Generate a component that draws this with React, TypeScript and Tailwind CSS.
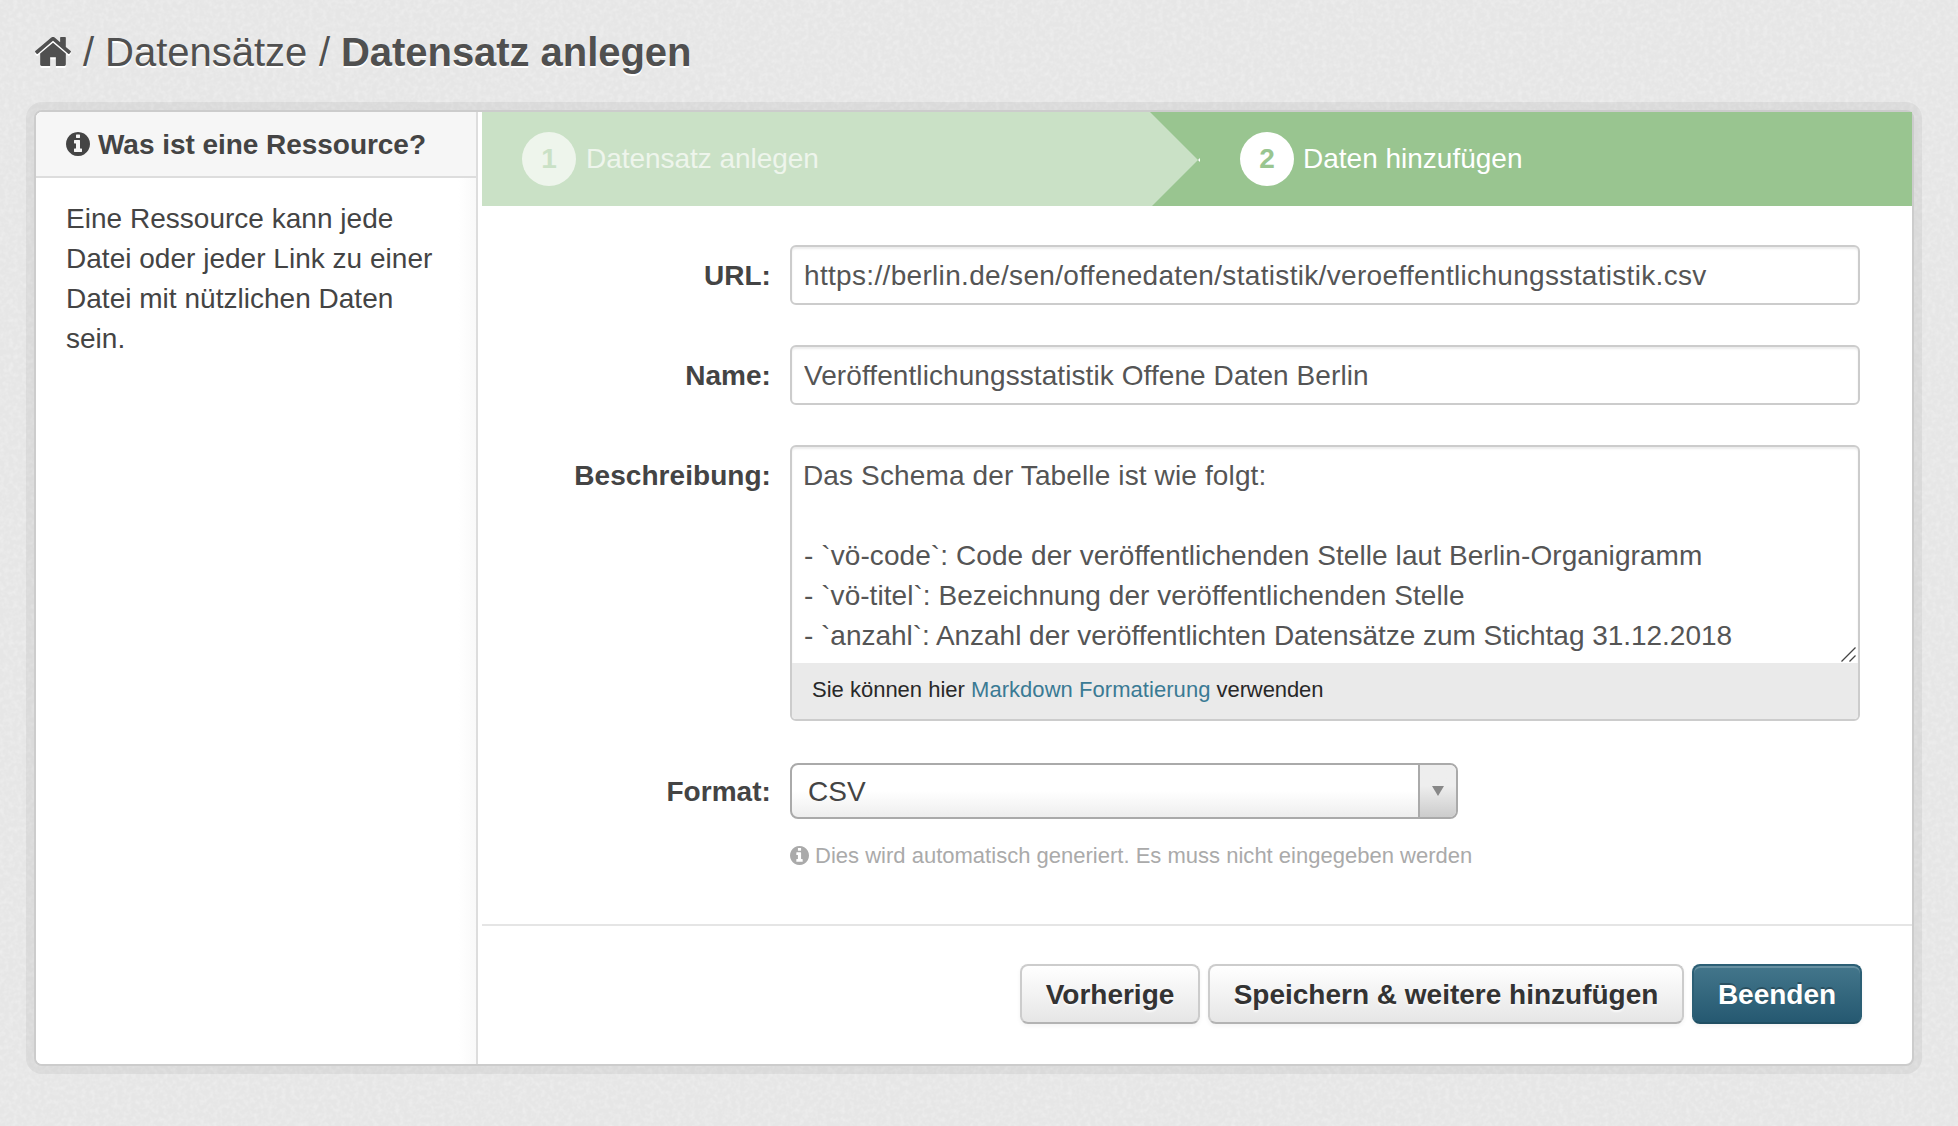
import React from 'react';

function HomeIcon() {
  return (
    <svg viewBox="24 256 1616 1280" preserveAspectRatio="none" className="h-[29px] w-[36px]" fill="currentColor">
      <path d="M1408 992v480q0 26-19 45t-45 19h-384v-384h-256v384h-384q-26 0-45-19t-19-45v-480q0-1 .5-3t.5-3l575-474 575 474q1 2 1 6zm223-69l-62 74q-8 9-21 11h-3q-13 0-21-7l-692-577-692 577q-12 8-24 7-13-2-21-11l-62-74q-8-10-7-23.5t11-21.5l719-599q32-26 76-26t76 26l244 204v-195q0-14 9-23t23-9h192q14 0 23 9t9 23v408l219 182q10 8 11 21.5t-7 23.5z" />
    </svg>
  );
}

function InfoIcon({ className }: { className: string }) {
  return (
    <svg viewBox="128 128 1536 1536" className={className} fill="currentColor">
      <path d="M1152 1376v-160q0-14-9-23t-23-9h-96v-512q0-14-9-23t-23-9h-320q-14 0-23 9t-9 23v160q0 14 9 23t23 9h96v320h-96q-14 0-23 9t-9 23v160q0 14 9 23t23 9h448q14 0 23-9t9-23zm-128-896v-160q0-14-9-23t-23-9h-192q-14 0-23 9t-9 23v160q0 14 9 23t23 9h192q14 0 23-9t9-23zm640 416q0 209-103 385.5t-279.5 279.5-385.5 103-385.5-103-279.5-279.5-103-385.5 103-385.5 279.5-279.5 385.5-103 385.5 103 279.5 279.5 103 385.5z" />
    </svg>
  );
}

function PaperTexture() {
  return (
    <svg className="absolute inset-0 h-full w-full" aria-hidden="true">
      <filter id="paper" x="0" y="0" width="100%" height="100%">
        <feTurbulence type="fractalNoise" baseFrequency="0.22" numOctaves={2} seed={4} />
        <feColorMatrix type="matrix" values="0 0 0 0 1  0 0 0 0 1  0 0 0 0 1  0.6 0 0 0 -0.24" />
      </filter>
      <rect width="100%" height="100%" filter="url(#paper)" />
    </svg>
  );
}

function Label({ children }: { children: React.ReactNode }) {
  return (
    <label className="mr-[19px] mt-[11px] w-[289px] shrink-0 text-right font-bold tracking-[0.05px] text-[#444]">
      {children}
    </label>
  );
}

const fieldBox =
  'h-[60px] w-[1070px] rounded-[6px] border-2 border-[#ccc] bg-white pl-[12px] pt-px leading-[40px] text-[#555] shadow-[inset_0_2px_2px_rgba(0,0,0,0.075)] outline-none';

const buttonBase = 'h-[60px] rounded-[8px] border-2 pt-[2px] text-center font-bold leading-[54px]';
const buttonPlain =
  'border-[#ccc] border-b-[#b3b3b3] bg-linear-to-b from-white to-[#e6e6e6] text-[#333] [text-shadow:0_2px_2px_rgba(255,255,255,0.75)] shadow-[inset_0_2px_0_rgba(255,255,255,0.2),0_2px_4px_rgba(0,0,0,0.05)]';

export default function App() {
  return (
    <div className="relative h-[1126px] w-[1958px] overflow-hidden bg-[#e6e6e6] font-['Liberation_Sans',Arial,sans-serif] text-[28px] leading-[40px] text-[#444]">
      <PaperTexture />
      <div className="relative pl-[34px] pt-[32px]">
        <nav className="flex h-[78px] items-start text-[40px] text-[#505050] [text-shadow:0_2px_0_#fff]">
          <a className="ml-px mt-[5px] [filter:drop-shadow(0_2px_0_#fff)]">
            <HomeIcon />
          </a>
          <span className="ml-[12px] w-[11px]">/</span>
          <a className="ml-[11px] w-[203px]">Datensätze</a>
          <span className="ml-[11px] w-[12px]">/</span>
          <a className="ml-[10px] font-bold tracking-[-0.05px]">Datensatz anlegen</a>
        </nav>

        <div className="flex h-[956px] w-[1880px] rounded-[8px] border-2 border-[#ccc] bg-white shadow-[0_0_0_8px_rgba(0,0,0,0.05)]">
          <aside className="w-[442px] shrink-0 rounded-l-[6px] border-r-2 border-[#ddd] bg-linear-to-r from-white from-[96%] to-[#f9f9f9]">
            <h2 className="flex h-[66px] items-start rounded-tl-[6px] border-b-2 border-[#ddd] bg-[#f6f6f6] pl-[30px] pt-[13px] font-bold tracking-[-0.04px]">
              <InfoIcon className="mr-[8px] mt-[7px] size-6" />
              Was ist eine Ressource?
            </h2>
            <p className="pl-[30px] pt-[21px] tracking-[0.02px]">
              Eine Ressource kann jede
              <br />
              Datei oder jeder Link zu einer
              <br />
              Datei mit nützlichen Daten
              <br />
              sein.
            </p>
          </aside>

          <main className="ml-[4px] w-[1430px]">
            <ol className="flex h-[94px]">
              <li className="flex w-[668px] items-start bg-[#cae1c6] pl-[40px] text-[#eef5ec]">
                <span className="mt-[20px] size-[54px] rounded-full bg-[#eef5ec] text-center font-bold leading-[53px] text-[#cae1c6]">
                  1
                </span>
                <span className="ml-[10px] mt-[27px] tracking-[-0.04px]">Datensatz anlegen</span>
              </li>
              <li className="flex w-[762px] items-start bg-[#99c590] text-white">
                <svg viewBox="0 0 50 94" className="h-[94px] w-[50px]">
                  <path d="M0 0L48 48L2 94H0Z" fill="#cae1c6" />
                  <path d="M50 46L48 48L50 50Z" fill="#fff" />
                </svg>
                <span className="ml-[40px] mt-[20px] size-[54px] rounded-full bg-white text-center font-bold leading-[53px] text-[#99c590]">
                  2
                </span>
                <span className="ml-[9px] mt-[27px]">Daten hinzufügen</span>
              </li>
            </ol>

            <form className="h-[718px] pt-[39px]">
              <div className="flex h-[100px] items-start">
                <Label>URL:</Label>
                <input
                  className={`${fieldBox} tracking-[0.324px]`}
                  defaultValue="https://berlin.de/sen/offenedaten/statistik/veroeffentlichungsstatistik.csv"
                />
              </div>
              <div className="flex h-[100px] items-start">
                <Label>Name:</Label>
                <input
                  className={`${fieldBox} tracking-[0.083px]`}
                  defaultValue="Veröffentlichungsstatistik Offene Daten Berlin"
                />
              </div>
              <div className="flex h-[318px] items-start">
                <Label>Beschreibung:</Label>
                <div className="h-[276px] w-[1070px] overflow-hidden rounded-[6px] border-2 border-[#ccc] shadow-[inset_0_2px_2px_rgba(0,0,0,0.075)]">
                  <div className="relative h-[216px] whitespace-pre pl-[12px] pt-[9px] text-[#555]">
                    <div className="-ml-px tracking-[0.13px]">Das Schema der Tabelle ist wie folgt:</div>
                    <div className="h-[40px]" />
                    <div className="tracking-[0.079px]">
                      - `vö-code`: Code der veröffentlichenden Stelle laut Berlin-Organigramm
                    </div>
                    <div className="tracking-[0.05px]">- `vö-titel`: Bezeichnung der veröffentlichenden Stelle</div>
                    <div className="tracking-[-0.03px]">
                      - `anzahl`: Anzahl der veröffentlichten Datensätze zum Stichtag 31.12.2018
                    </div>
                    <svg viewBox="0 0 15 15" className="absolute bottom-px right-[2px] size-[15px]" stroke="#444" strokeWidth="1.3">
                      <path d="M0.5 14.5L14.5 0.5M8.5 14.5L14.5 8.5" />
                    </svg>
                  </div>
                  <div className="h-[56px] bg-[#eaeaea] pl-[20px] pt-[7px] text-[22px] text-[#282828]">
                    Sie können hier <a className="tracking-[0.05px] text-[#3a7a94]">Markdown Formatierung</a>{' '}
                    <span className="tracking-[-0.1px]">verwenden</span>
                  </div>
                </div>
              </div>
              <div className="flex items-start">
                <Label>
                  <span className="-mt-[2px] block">Format:</span>
                </Label>
                <div>
                  <div className="flex h-[56px] w-[668px] overflow-hidden rounded-[8px] border-2 border-[#aaa] bg-linear-to-b from-white from-50% to-[#eee]">
                    <span className="w-[626px] pl-[16px] pt-[7px]">CSV</span>
                    <span className="flex w-[38px] justify-center border-l-2 border-[#aaa] bg-linear-to-b from-[#eee] from-40% to-[#ccc] pt-[21px]">
                      <svg viewBox="0 0 12 10" className="h-[10px] w-[12px]" fill="#888">
                        <path d="M0 0H12L6 10Z" />
                      </svg>
                    </span>
                  </div>
                  <p className="mt-[17px] flex items-start text-[22px] tracking-[0.01px] text-[#aaa]">
                    <InfoIcon className="mr-[6px] mt-[10px] size-[19px]" />
                    Dies wird automatisch generiert. Es muss nicht eingegeben werden
                  </p>
                </div>
              </div>
            </form>

            <div className="flex gap-[8px] border-t-2 border-[#e5e5e5] pl-[538px] pt-[38px]">
              <button className={`${buttonBase} ${buttonPlain} w-[180px]`}>Vorherige</button>
              <button className={`${buttonBase} ${buttonPlain} w-[476px]`}>Speichern &amp; weitere hinzufügen</button>
              <button
                className={`${buttonBase} w-[170px] border-[#2c5f75] border-b-[#204f63] bg-linear-to-b from-[#44778c] to-[#245870] bg-origin-border text-white [text-shadow:0_-2px_0_rgba(0,0,0,0.25)] shadow-[inset_0_2px_0_rgba(255,255,255,0.2),0_2px_4px_rgba(0,0,0,0.05)]`}
              >
                Beenden
              </button>
            </div>
          </main>
        </div>
      </div>
    </div>
  );
}
